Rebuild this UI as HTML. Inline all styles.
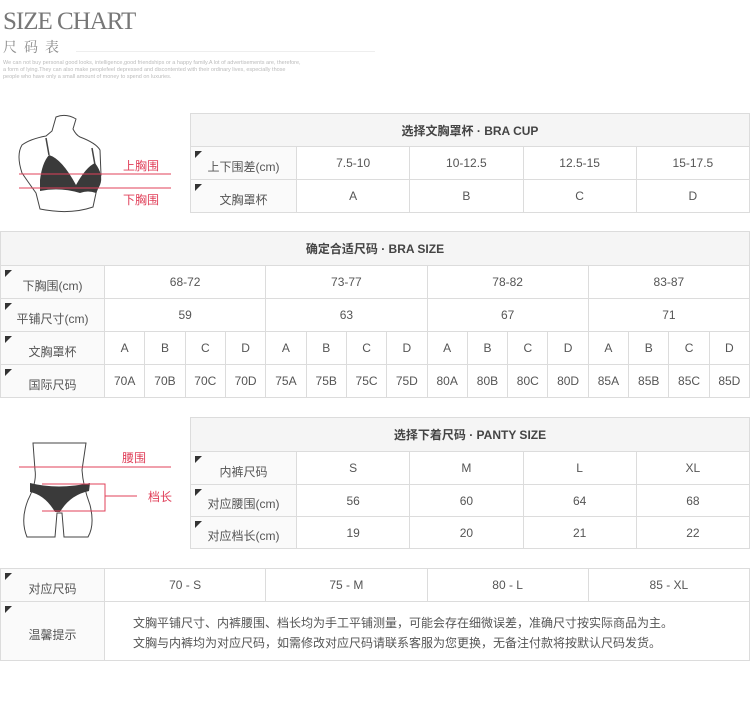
<!DOCTYPE html>
<html><head><meta charset="utf-8"><style>
body{margin:0;width:750px;height:701px;background:#fff;position:relative;overflow:hidden;font-family:"Liberation Sans","Noto Sans CJK SC",sans-serif;color:#555}
.t{position:absolute;border-collapse:collapse;table-layout:fixed;font-size:12px}
.t td{border:1px solid #dcdcdc;text-align:center;padding:0;position:relative;color:#555}
.t td.h{background:#f5f5f5;font-weight:bold;color:#444}
.t td.l{background:#fafafa;padding-top:6px}
.t td.l:before{content:"";position:absolute;left:4px;top:4px;border-top:7px solid #333;border-right:7px solid transparent}
.ab{position:absolute}
</style></head><body>
<div class="ab" style="left:3px;top:8px;font-family:'Liberation Serif',serif;font-size:25px;color:#777;letter-spacing:-1px">SIZE CHART</div>
<div class="ab" style="left:3px;top:37px;font-family:'Liberation Sans','Noto Serif CJK SC',serif;font-size:14px;color:#888;letter-spacing:7px">尺码表</div>
<div class="ab" style="left:76px;top:51px;width:299px;border-top:1px solid #eee"></div>
<div class="ab" style="left:3px;top:60px;font-size:5.5px;line-height:7px;color:#bbb;width:300px">We can not buy personal good looks, intelligence,good friendships or a happy family.A lot of advertisements are, therefore, a form of lying.They can also make peoplefeel depressed and discontented with their ordinary lives, especially those people who have only a small amount of money to spend on luxuries.</div>

<svg class="ab" style="left:0;top:105px" width="190" height="110">
<path d="M56 12 Q66 8 76 14 L73 24 Q76 30 80 32 Q96 38 100 45 L101 70 L96 88 L93 102 Q70 110 40 104 L36 88 Q26 74 22 68 Q16 50 22 40 Q30 34 46 31 L52 26 Z" fill="none" stroke="#444" stroke-width="1"/>
<path d="M46 33 L49 50 M92 43 L95 60" stroke="#444" stroke-width="1.5" fill="none"/>
<path d="M40 75 Q42 58 49 50 Q62 54 76 80 Q86 62 95 58 Q104 70 100 80 L96 88 Q88 85 80 88 Q60 82 40 86 Z" fill="#3a3a3a"/>
<line x1="19" y1="69" x2="171" y2="69" stroke="#e0405a" stroke-width="1"/>
<line x1="19" y1="83" x2="171" y2="83" stroke="#e0405a" stroke-width="1"/>
<text x="123" y="65" font-size="12" fill="#e0405a" font-family="Noto Sans CJK SC">上胸围</text>
<text x="123" y="99" font-size="12" fill="#e0405a" font-family="Noto Sans CJK SC">下胸围</text>
</svg>
<svg class="ab" style="left:0;top:420px" width="190" height="120">
<path d="M33 23 L86 23 L82 50 Q83 66 90 85 Q95 105 88 117 L64 117 L62 93 L57 93 L55 117 L27 117 Q20 100 28 80 Q37 62 35 50 Z" fill="none" stroke="#444" stroke-width="1"/>
<path d="M30 63 Q58 70 90 63 L89 71 Q70 75 60 92 L55 92 Q45 75 30 72 Z" fill="#3a3a3a"/>
<line x1="19" y1="47" x2="171" y2="47" stroke="#e0405a"/>
<path d="M42 64 L105 64 L105 91 L42 91 M105 76 L137 76" fill="none" stroke="#e0405a"/>
<text x="122" y="42" font-size="12" fill="#e0405a" font-family="Noto Sans CJK SC">腰围</text>
<text x="148" y="81" font-size="12" fill="#e0405a" font-family="Noto Sans CJK SC">档长</text>
</svg>

<table class="t" style="left:190px;top:113px;width:560px;height:100px">
<colgroup><col style="width:106px"><col><col><col><col></colgroup>
<tr style="height:33px"><td class="h" colspan="5">选择文胸罩杯 · BRA CUP</td></tr>
<tr style="height:33px"><td class="l">上下围差(cm)</td><td>7.5-10</td><td>10-12.5</td><td>12.5-15</td><td>15-17.5</td></tr>
<tr style="height:33px"><td class="l">文胸罩杯</td><td>A</td><td>B</td><td>C</td><td>D</td></tr>
</table>

<table class="t" style="left:0;top:231px;width:750px;height:166px">
<colgroup><col style="width:104px"><col><col><col><col><col><col><col><col><col><col><col><col><col><col><col><col></colgroup>
<tr style="height:34px"><td class="h" colspan="17">确定合适尺码 · BRA SIZE</td></tr>
<tr style="height:33px"><td class="l">下胸围(cm)</td><td colspan="4">68-72</td><td colspan="4">73-77</td><td colspan="4">78-82</td><td colspan="4">83-87</td></tr>
<tr style="height:33px"><td class="l">平铺尺寸(cm)</td><td colspan="4">59</td><td colspan="4">63</td><td colspan="4">67</td><td colspan="4">71</td></tr>
<tr style="height:33px"><td class="l">文胸罩杯</td><td>A</td><td>B</td><td>C</td><td>D</td><td>A</td><td>B</td><td>C</td><td>D</td><td>A</td><td>B</td><td>C</td><td>D</td><td>A</td><td>B</td><td>C</td><td>D</td></tr>
<tr style="height:33px"><td class="l">国际尺码</td><td>70A</td><td>70B</td><td>70C</td><td>70D</td><td>75A</td><td>75B</td><td>75C</td><td>75D</td><td>80A</td><td>80B</td><td>80C</td><td>80D</td><td>85A</td><td>85B</td><td>85C</td><td>85D</td></tr>
</table>

<table class="t" style="left:190px;top:417px;width:560px;height:132px">
<colgroup><col style="width:106px"><col><col><col><col></colgroup>
<tr style="height:34px"><td class="h" colspan="5">选择下着尺码 · PANTY SIZE</td></tr>
<tr style="height:33px"><td class="l">内裤尺码</td><td>S</td><td>M</td><td>L</td><td>XL</td></tr>
<tr style="height:32px"><td class="l">对应腰围(cm)</td><td>56</td><td>60</td><td>64</td><td>68</td></tr>
<tr style="height:32px"><td class="l">对应档长(cm)</td><td>19</td><td>20</td><td>21</td><td>22</td></tr>
</table>

<table class="t" style="left:0;top:568px;width:750px;height:93px">
<colgroup><col style="width:104px"><col><col><col><col></colgroup>
<tr style="height:33px"><td class="l">对应尺码</td><td>70 - S</td><td>75 - M</td><td>80 - L</td><td>85 - XL</td></tr>
<tr style="height:59px"><td class="l">温馨提示</td><td colspan="4" style="text-align:left;padding-left:28px;line-height:20px;padding-top:4px">文胸平铺尺寸、内裤腰围、档长均为手工平铺测量，可能会存在细微误差，准确尺寸按实际商品为主。<br>文胸与内裤均为对应尺码，如需修改对应尺码请联系客服为您更换，无备注付款将按默认尺码发货。</td></tr>
</table>
</body></html>
